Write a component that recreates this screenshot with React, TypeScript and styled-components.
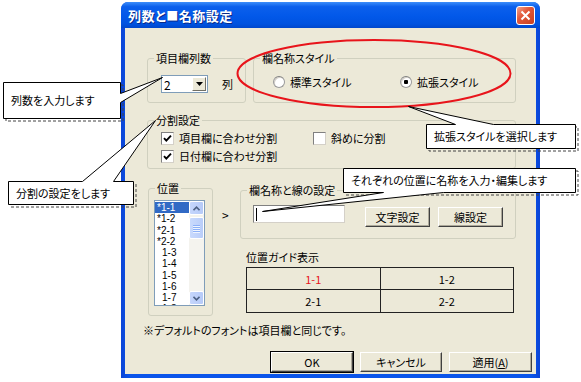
import styled, { createGlobalStyle } from "styled-components";

const GlobalStyle = createGlobalStyle`
  body {
    margin: 0;
    background: #fff;
    font-family: "Noto Sans CJK JP", "Noto Sans", sans-serif;
    font-size: 11px;
    font-feature-settings: "palt";
    color: #000;
  }
`;

type Pt = [number, number];

/** 吹き出しの外形（箱＋しっぽ）を作る */
const balloonPath = (
  w: number,
  h: number,
  edge: "top" | "right" | "bottom",
  b1: number,
  b2: number,
  apex: Pt,
) => {
  const [ax, ay] = apex;
  if (edge === "right")
    return `M0,0 H${w} V${b1} L${ax},${ay} L${w},${b2} V${h} H0 Z`;
  if (edge === "top")
    return `M0,0 H${b1} L${ax},${ay} L${b2},0 H${w} V${h} H0 Z`;
  return `M0,0 H${w} V${h} H${b2} L${ax},${ay} L${b1},${h} H0 Z`;
};

const callouts = [
  { x: 3, y: 82, w: 117, h: 36, edge: "right" as const, b1: 11, b2: 20, apex: [159, -5] as Pt, text: "列数を入力します" },
  { x: 426, y: 124, w: 149, h: 24, edge: "top" as const, b1: 29, b2: 67, apex: [-18, -18] as Pt, text: "拡張スタイルを選択します" },
  { x: 8, y: 181, w: 125, h: 23, edge: "top" as const, b1: 74, b2: 105, apex: [147, -61] as Pt, text: "分割の設定をします" },
  { x: 343, y: 168, w: 232, h: 24, edge: "bottom" as const, b1: 40, b2: 100, apex: [-81, 43] as Pt, text: "それぞれの位置に名称を入力・編集します" },
];

const positions = ["*1-1", "*1-2", "*2-1", "*2-2", "1-3", "1-4", "1-5", "1-6", "1-7", "1-8"];

const CheckMark = () => (
  <svg width="11" height="11" viewBox="0 0 11 11">
    <path d="M2 5.2 L4.3 7.6 L9 2.6" fill="none" stroke="#000" strokeWidth="1.9" />
  </svg>
);

const App = () => {
  return (
    <Page>
      <GlobalStyle />
      <Window>
        <TitleBar>
          <TitleText>
            列数と<TitleGlyph>■</TitleGlyph>名称設定
          </TitleText>
          <CloseButton>
            <svg width="11" height="11" viewBox="0 0 11 11">
              <path d="M1.5 1.5 L9.5 9.5 M9.5 1.5 L1.5 9.5" stroke="#fff" strokeWidth="2" />
            </svg>
          </CloseButton>
        </TitleBar>

        <Client>
          <Row $gap={7}>
            <Group $w={99} $pt={10} $pb={9} $pl={13}>
              <legend>項目欄列数</legend>
              <ComboRow>
                <Combo>
                  <ComboValue>2</ComboValue>
                  <ComboButton>
                    <svg width="7" height="4" viewBox="0 0 7 4">
                      <path d="M0 0 H7 L3.5 4 Z" fill="#000" />
                    </svg>
                  </ComboButton>
                </Combo>
                <span>列</span>
              </ComboRow>
            </Group>

            <Group $w={263} $pt={8} $pb={11} $pl={19}>
              <legend>欄名称スタイル</legend>
              <OptionRow>
                <Option $w={127}>
                  <Radio />
                  標準スタイル
                </Option>
                <Option>
                  <Radio $checked />
                  拡張スタイル
                </Option>
              </OptionRow>
            </Group>
          </Row>

          <SplitGroup $w={369} $pt={2} $pb={3} $pl={13}>
            <legend>分割設定</legend>
            <OptionRow>
              <Option $w={152}>
                <CheckBox>
                  <CheckMark />
                </CheckBox>
                項目欄に合わせ分割
              </Option>
              <Option>
                <CheckBox />
                斜めに分割
              </Option>
            </OptionRow>
            <OptionRow>
              <Option>
                <CheckBox>
                  <CheckMark />
                </CheckBox>
                日付欄に合わせ分割
              </Option>
            </OptionRow>
          </SplitGroup>

          <PositionRow>
            <PositionGroup $w={65} $pt={5} $pb={9} $pl={5}>
              <legend>位置</legend>
              <ListBox>
                <ListItems>
                  {positions.map((p, i) => (
                    <ListItem key={p} $selected={i === 0} $indent={!p.startsWith("*")}>
                      {p}
                    </ListItem>
                  ))}
                </ListItems>
                <ScrollBar>
                  <ScrollButton>
                    <svg width="7" height="5" viewBox="0 0 7 5">
                      <path d="M0.5 4.2 L3.5 1.2 L6.5 4.2" fill="none" stroke="#4D6185" strokeWidth="1.6" />
                    </svg>
                  </ScrollButton>
                  <ScrollThumb>
                    <Grip />
                    <Grip />
                    <Grip />
                    <Grip />
                  </ScrollThumb>
                  <ScrollButton $bottom>
                    <svg width="7" height="5" viewBox="0 0 7 5">
                      <path d="M0.5 0.8 L3.5 3.8 L6.5 0.8" fill="none" stroke="#4D6185" strokeWidth="1.6" />
                    </svg>
                  </ScrollButton>
                </ScrollBar>
              </ListBox>
            </PositionGroup>

            <Arrow>&gt;</Arrow>

            <RightColumn>
              <Group $w={276} $pt={8} $pb={11} $pl={12}>
                <legend>欄名称と線の設定</legend>
                <NameRow>
                  <NameInput>
                    <Caret />
                  </NameInput>
                  <DialogButton $w={65}>文字設定</DialogButton>
                  <DialogButton $w={65}>線設定</DialogButton>
                </NameRow>
              </Group>

              <GuideLabel>位置ガイド表示</GuideLabel>
              <Guide>
                <GuideCell $active>1-1</GuideCell>
                <GuideCell>1-2</GuideCell>
                <GuideCell>2-1</GuideCell>
                <GuideCell>2-2</GuideCell>
              </Guide>
            </RightColumn>
          </PositionRow>

          <Note>※デフォルトのフォントは項目欄と同じです。</Note>

          <ButtonRow>
            <DialogButton $w={82} $default>
              OK
            </DialogButton>
            <DialogButton $w={82}>キャンセル</DialogButton>
            <DialogButton $w={83}>
              適用(<u>A</u>)
            </DialogButton>
          </ButtonRow>
        </Client>
      </Window>

      <Ellipse width="276" height="71" viewBox="0 0 276 71">
        <ellipse cx="138" cy="35.5" rx="136.5" ry="33.5" fill="none" stroke="#E8141B" strokeWidth="2" />
      </Ellipse>

      {callouts.map((c) => (
        <Callout key={c.text} $x={c.x} $y={c.y} $w={c.w} $h={c.h}>
          <CalloutShape width={c.w} height={c.h}>
            <rect
              x="3"
              y="3"
              width={c.w}
              height={c.h}
              fill="none"
              stroke="#444"
              strokeDasharray="3 2"
            />
            <path
              d={balloonPath(c.w, c.h, c.edge, c.b1, c.b2, c.apex)}
              fill="#fff"
              stroke="#000"
              strokeWidth="1"
              transform="translate(0.5 0.5)"
            />
          </CalloutShape>
          {c.text}
        </Callout>
      ))}
    </Page>
  );
};

export default App;

const Page = styled.div`
  position: relative;
  width: 581px;
  height: 382px;
  overflow: hidden;
  background: #fff;
`;

const Window = styled.div`
  margin: 2px 0 0 121px;
  width: 419px;
  height: 376px;
  display: flex;
  flex-direction: column;
  border-radius: 7px 7px 0 0;
  background: linear-gradient(90deg, #0B44D6, #0A54EA 2%, #0A54EA 98%, #0B44D6);
`;

const TitleBar = styled.div`
  height: 26px;
  flex: none;
  display: flex;
  align-items: center;
  justify-content: space-between;
  padding: 0 5px 0 7px;
  border-radius: 7px 7px 0 0;
  background: linear-gradient(#3D8EFA, #0C60EC 18%, #0258E9 55%, #0052DF 85%, #0047CC);
`;

const TitleText = styled.span`
  color: #fff;
  font-weight: 700;
  font-size: 13px;
  letter-spacing: 0.5px;
  text-shadow: 1px 1px 0 #0A2A8A;
`;

const TitleGlyph = styled.span`
  font-size: 12px;
`;

const CloseButton = styled.div`
  width: 19px;
  height: 19px;
  box-sizing: border-box;
  display: flex;
  align-items: center;
  justify-content: center;
  border: 1px solid #fff;
  border-radius: 3px;
  background: linear-gradient(135deg, #F2A48E, #E2583A 40%, #C8401F);
`;

const Client = styled.div`
  flex: 1;
  margin: 0 4px 4px;
  padding: 23px 0 0 22px;
  display: flex;
  flex-direction: column;
  background: #ECE9D8;
`;

const Row = styled.div<{ $gap: number }>`
  display: flex;
  gap: ${({ $gap }) => $gap}px;
`;

/* legend は padding-left の内側に置かれるので、その分を戻す */
const Group = styled.fieldset<{ $w: number; $pt: number; $pb: number; $pl: number }>`
  margin: 0;
  min-width: 0;
  box-sizing: border-box;
  width: ${({ $w }) => $w}px;
  padding: ${({ $pt, $pb, $pl }) => `${$pt}px 0 ${$pb}px ${$pl}px`};
  border: 1px solid #D0D0BF;
  border-radius: 3px;

  & > legend {
    margin-left: ${({ $pl }) => 6 - $pl}px;
    padding: 0 2px;
    line-height: 14px;
    font-size: 11px;
  }
`;

const SplitGroup = styled(Group)`
  margin-top: 10px;
`;

const PositionGroup = styled(Group)`
  margin-left: 1px;
`;

const ComboRow = styled.div`
  display: flex;
  align-items: center;
  gap: 14px;
  height: 18px;
`;

const Combo = styled.div`
  width: 47px;
  height: 18px;
  box-sizing: border-box;
  display: flex;
  align-items: center;
  justify-content: space-between;
  padding: 1px;
  border: 1px solid #7F9DB9;
  background: #fff;
`;

const ComboValue = styled.span`
  padding-left: 1px;
  font-size: 12px;
`;

const ComboButton = styled.div`
  width: 14px;
  height: 14px;
  box-sizing: border-box;
  display: flex;
  align-items: center;
  justify-content: center;
  background: #ECE9D8;
  border: 1px solid;
  border-color: #fff #716F64 #716F64 #fff;
`;

const OptionRow = styled.div`
  display: flex;
  align-items: center;
  height: 18px;
`;

const Option = styled.label<{ $w?: number }>`
  display: flex;
  align-items: center;
  gap: 5px;
  width: ${({ $w }) => ($w ? `${$w}px` : "auto")};
`;

const Radio = styled.span<{ $checked?: boolean }>`
  width: 12px;
  height: 12px;
  box-sizing: border-box;
  border-radius: 50%;
  border: 1px solid #9A9A9A;
  border-top-color: #808080;
  background: ${({ $checked }) =>
    $checked
      ? "radial-gradient(circle, #000 0 2px, #fff 2.5px)"
      : "#fff"};
  box-shadow: inset 1px 1px 0 #D4D0C8;
`;

const CheckBox = styled.span`
  width: 13px;
  height: 13px;
  box-sizing: border-box;
  display: flex;
  align-items: center;
  justify-content: center;
  border: 1px solid;
  border-color: #808080 #D4D0C8 #D4D0C8 #808080;
  background: #fff;
`;

const PositionRow = styled.div`
  margin-top: 12px;
  display: flex;
  align-items: flex-start;
`;

const ListBox = styled.div`
  width: 51px;
  height: 106px;
  box-sizing: border-box;
  display: flex;
  border: 1px solid #7F9DB9;
  background: #fff;
  overflow: hidden;
`;

const ListItems = styled.div`
  flex: 1;
  padding-top: 1px;
`;

const ListItem = styled.div<{ $selected?: boolean; $indent?: boolean }>`
  height: 11.25px;
  line-height: 11.25px;
  padding-left: ${({ $indent }) => ($indent ? 7 : 2)}px;
  font-family: "Liberation Sans", Arial, sans-serif;
  font-size: 10px;
  color: ${({ $selected }) => ($selected ? "#fff" : "#000")};
  background: ${({ $selected }) => ($selected ? "#316AC5" : "transparent")};
`;

const ScrollBar = styled.div`
  width: 15px;
  display: flex;
  flex-direction: column;
  background: #F4F3EE;
`;

const ScrollButton = styled.div<{ $bottom?: boolean }>`
  height: 14px;
  margin-top: ${({ $bottom }) => ($bottom ? "auto" : "0")};
  box-sizing: border-box;
  display: flex;
  align-items: center;
  justify-content: center;
  border: 1px solid #fff;
  border-radius: 2px;
  background: linear-gradient(90deg, #C5D6FC, #B6CAF8);
`;

const ScrollThumb = styled.div`
  height: 22px;
  margin-top: 2px;
  box-sizing: border-box;
  display: flex;
  flex-direction: column;
  align-items: center;
  justify-content: center;
  gap: 1px;
  border: 1px solid #fff;
  border-radius: 2px;
  background: linear-gradient(90deg, #C9DAFD, #B9CDF9);
`;

const Grip = styled.span`
  width: 7px;
  height: 1px;
  background: #8CB0F8;
  box-shadow: 0 1px 0 #EEF4FE;
`;

const Arrow = styled.span`
  margin: 27px 0 0 9px;
  width: 18px;
  line-height: 14px;
  font-size: 12px;
`;

const RightColumn = styled.div`
  margin-top: 2px;
  display: flex;
  flex-direction: column;
`;

const NameRow = styled.div`
  display: flex;
  align-items: flex-start;
  gap: 8px;
`;

const NameInput = styled.div`
  width: 92px;
  height: 18px;
  margin-right: 12px;
  box-sizing: border-box;
  display: flex;
  align-items: center;
  padding-left: 2px;
  border: 1px solid;
  border-color: #808080 #D4D0C8 #D4D0C8 #808080;
  background: #fff;
`;

const Caret = styled.span`
  width: 1px;
  height: 13px;
  background: #000;
`;

const DialogButton = styled.button<{ $w: number; $default?: boolean }>`
  width: ${({ $w }) => $w}px;
  height: 20px;
  margin-top: 2px;
  padding: 0;
  box-sizing: border-box;
  font: inherit;
  font-size: 11px;
  color: #000;
  background: #ECE9D8;
  border: 1px solid;
  border-color: #fff #404040 #404040 #fff;
  box-shadow: inset -1px -1px 0 #ACA899
    ${({ $default }) => ($default ? ", 0 0 0 1px #000" : "")};
`;

const GuideLabel = styled.div`
  margin: 11px 0 0 6px;
  line-height: 14px;
`;

const Guide = styled.div`
  margin: 3px 0 0 6px;
  width: 266px;
  display: grid;
  grid-template-columns: 1fr 1fr;
  grid-template-rows: 21px 22px;
  gap: 1px;
  border: 1px solid #222;
  background: #222;
`;

const GuideCell = styled.div<{ $active?: boolean }>`
  display: flex;
  align-items: center;
  justify-content: center;
  background: #ECE9D8;
  color: ${({ $active }) => ($active ? "#E8141B" : "#000")};
`;

const Note = styled.div`
  margin: 7px 0 0 -4px;
  line-height: 14px;
`;

const ButtonRow = styled.div`
  margin-top: 13px;
  padding-right: 4px;
  display: flex;
  justify-content: flex-end;
  gap: 7px;
`;

const Ellipse = styled.svg`
  position: absolute;
  left: 236px;
  top: 38px;
`;

const Callout = styled.div<{ $x: number; $y: number; $w: number; $h: number }>`
  position: absolute;
  z-index: 2;
  left: ${({ $x }) => $x}px;
  top: ${({ $y }) => $y}px;
  width: ${({ $w }) => $w}px;
  height: ${({ $h }) => $h}px;
  box-sizing: border-box;
  display: flex;
  align-items: center;
  padding-left: 8px;
  font-size: 11px;
  white-space: nowrap;
`;

const CalloutShape = styled.svg`
  position: absolute;
  left: 0;
  top: 0;
  z-index: -1;
  overflow: visible;
`;
